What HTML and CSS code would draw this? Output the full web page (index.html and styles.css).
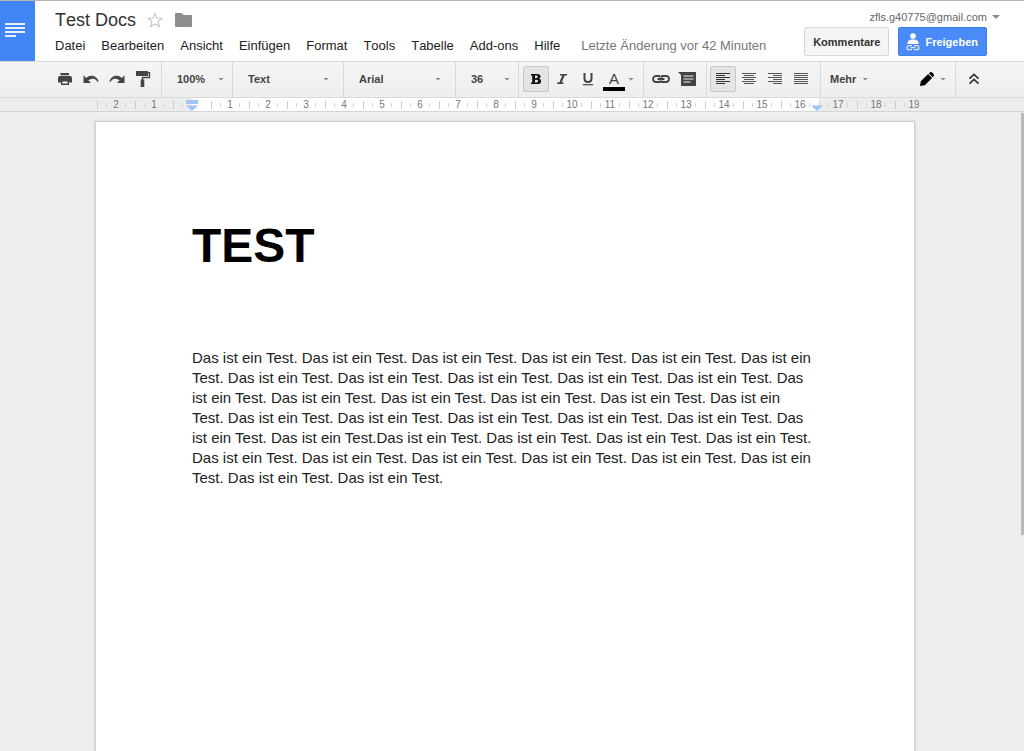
FILE: index.html
```html
<!DOCTYPE html>
<html lang="de">
<head>
<meta charset="utf-8">
<title>Test Docs</title>
<link rel="stylesheet" href="styles.css">
</head>
<body>
<header class="header">
  <a class="home" href="#" aria-label="Startseite">
    <svg width="20" height="16" viewBox="0 0 20 16"><path d="M0 2h20M0 6h20M0 10h20M0 14h11" stroke="#e9f1ff" stroke-width="2"/></svg>
  </a>
  <div class="heading">
    <div class="title-row">
      <h1 class="title">Test Docs</h1>
      <button class="plain" aria-label="Markieren"><svg width="16" height="16" viewBox="0 0 16 16"><path d="M8 1.400l1.900 4.600 5 .4-3.800 3.300 1.200 4.900L8 12l-4.300 2.600 1.200-4.900L1.100 6.400l5-.4z" fill="none" stroke="#c4c4c4" stroke-width="1.100"/></svg></button>
      <button class="plain" aria-label="Ordner"><svg width="17" height="16" viewBox="0 0 17 16"><path d="M1 1h5.500l2 2H16q1 0 1 1v10q0 1-1 1H1q-1 0-1-1V2q0-1 1-1z" fill="#8d8d8d"/></svg></button>
    </div>
    <nav class="menu">
      <button class="menu-item">Datei</button>
      <button class="menu-item">Bearbeiten</button>
      <button class="menu-item">Ansicht</button>
      <button class="menu-item">Einfügen</button>
      <button class="menu-item">Format</button>
      <button class="menu-item">Tools</button>
      <button class="menu-item">Tabelle</button>
      <button class="menu-item">Add-ons</button>
      <button class="menu-item">Hilfe</button>
      <a class="saved" href="#">Letzte Änderung vor 42 Minuten</a>
    </nav>
  </div>
  <div class="account">
    <button class="email">zfls.g40775@gmail.com <span class="caret wide"></span></button>
    <div class="actions">
      <button class="action">Kommentare</button>
      <button class="action share"><svg width="14" height="18" viewBox="0 0 14 18"><circle cx="7" cy="3" r="2.800" fill="#fff"/><path d="M1.500 11V9.500Q2 7 5 6.600h4q3 .4 3.500 2.900V11z" fill="#fff"/><path d="M6 12.700H3a2 2 0 0 0 0 4h3M8 12.700h3a2 2 0 0 1 0 4H8M4.500 14.700h5" fill="none" stroke="#dbe8ff" stroke-width="1.200"/></svg>Freigeben</button>
    </div>
  </div>
</header>

<div class="toolbar" role="toolbar">
  <div class="group first">
    <button class="tool" aria-label="Drucken"><svg width="16" height="14" viewBox="0 0 16 14"><path d="M3.500 1h8.500v2.200H3.500zM3 4h10q2 0 2 2v4.500h-3V8H4v2.500H1V6q0-2 2-2z" fill="#444"/><path d="M4.700 8.700h6.600v3.600H4.700z" fill="#f5f5f5" stroke="#444" stroke-width="1.400"/></svg></button>
    <button class="tool" aria-label="Rückgängig"><svg width="16" height="14" viewBox="0 0 16 14"><path d="M.5 3v8H8L5.300 8.300Q8 6.200 10.700 6.800 13.200 7.400 14.600 10L15.600 9.500Q14.200 5 10.500 4 6.200 3 3 6z" fill="#444"/></svg></button>
    <button class="tool" aria-label="Wiederholen"><svg width="16" height="14" viewBox="0 0 16 14"><path d="M15.500 3v8H8l2.700-2.700Q8 6.200 5.300 6.800 2.800 7.400 1.400 10L.4 9.500Q1.800 5 5.500 4 9.800 3 13 6z" fill="#444"/></svg></button>
    <button class="tool" aria-label="Format übertragen"><svg width="16" height="18" viewBox="0 0 16 18"><path d="M1 1h12v5H1zM5.700 9.500h3.600V17H5.700z" fill="#444"/><path d="M12.500 2.700h2v4.800h-7v3" fill="none" stroke="#444" stroke-width="1.400"/></svg></button>
  </div>
  <label class="group pick zoom"><select aria-label="Zoom"><option>100%</option></select><span class="caret"></span></label>
  <label class="group pick style"><select aria-label="Formatvorlage"><option>Text</option></select><span class="caret"></span></label>
  <label class="group pick font"><select aria-label="Schriftart"><option>Arial</option></select><span class="caret"></span></label>
  <label class="group pick size"><select aria-label="Schriftgröße"><option>36</option></select><span class="caret"></span></label>
  <div class="group format">
    <button class="tool on bold" aria-pressed="true" aria-label="Fett"><svg width="12" height="12" viewBox="0 0 12 12"><path fill-rule="evenodd" d="M1 1h6.200q3.400 0 3.400 2.600 0 1.700-1.700 2.100 2.200.4 2.200 2.500Q11.100 11 7.600 11H1V9.400h1.200V2.600H1zM5 2.600v2.500h1.300q1.500 0 1.500-1.300T6.300 2.600zM5 6.700v2.700h1.600Q8.100 9.400 8.100 8T6.600 6.700z" fill="#111"/></svg></button>
    <button class="tool" aria-label="Kursiv"><svg width="12" height="12" viewBox="0 0 12 12"><path d="M4 1.800h7M1 10.200h6.500" stroke="#444" stroke-width="1.600"/><path d="M7.800 1.500L4.200 10.500" stroke="#444" stroke-width="2.200"/></svg></button>
    <button class="tool" aria-label="Unterstrichen"><svg width="12" height="14" viewBox="0 0 12 14"><path d="M2.500 1v5.500Q2.500 10 6 10t3.500-3.500V1" fill="none" stroke="#444" stroke-width="2"/><path d="M1 12.700h10" stroke="#444" stroke-width="1.200"/></svg></button>
    <button class="tool color" aria-label="Textfarbe"><span>A</span></button>
    <span class="caret"></span>
  </div>
  <div class="group insert">
    <button class="tool" aria-label="Link"><svg width="20" height="12" viewBox="0 0 20 12"><path d="M9 3H5a3 3 0 0 0 0 6h4V7.500M9 4.500V3M11 4.500V3h4a3 3 0 0 1 0 6h-4V7.500M6.500 6h7" fill="none" stroke="#444" stroke-width="1.800"/></svg></button>
    <button class="tool" aria-label="Kommentar"><svg width="18" height="16" viewBox="0 0 18 16"><path d="M0 1h18v14H3V4z" fill="#444"/><path d="M5.500 5h10M5.500 8h10M5.500 11h7" stroke="#eee" stroke-width="1.200"/></svg></button>
  </div>
  <div class="group align">
    <button class="tool on" aria-pressed="true" aria-label="Linksbündig"><svg width="16" height="14" viewBox="0 0 16 14"><path d="M1 1.500h14M1 3.500h9M1 5.500h14M1 7.500h9M1 9.500h14M1 11.500h9" stroke="#333"/></svg></button>
    <button class="tool" aria-label="Zentriert"><svg width="16" height="14" viewBox="0 0 16 14"><path d="M1 1.500h14M3 3.500h10M1 5.500h14M3 7.500h10M1 9.500h14M3 11.500h10" stroke="#555"/></svg></button>
    <button class="tool" aria-label="Rechtsbündig"><svg width="16" height="14" viewBox="0 0 16 14"><path d="M1 1.500h14M6 3.500h9M1 5.500h14M6 7.500h9M1 9.500h14M6 11.500h9" stroke="#555"/></svg></button>
    <button class="tool" aria-label="Blocksatz"><svg width="16" height="14" viewBox="0 0 16 14"><path d="M1 1.500h14M1 3.500h14M1 5.500h14M1 7.500h14M1 9.500h14M1 11.500h14" stroke="#555"/></svg></button>
  </div>
  <div class="group more">
    <button class="more-button">Mehr <span class="caret"></span></button>
    <button class="mode" aria-label="Bearbeitungsmodus"><svg width="14" height="14" viewBox="0 0 14 14"><path d="M0 14l.8-4.800L8.100 2l4 4-7.300 7.200zM8.900 1.300L10.200.2q.8-.5 1.600 0l2 2q.5.800 0 1.600l-1.200 1.400z" fill="#000"/></svg><span class="caret"></span></button>
  </div>
  <div class="group collapse">
    <button class="tool" aria-label="Menüs ausblenden"><svg width="12" height="12" viewBox="0 0 12 12"><path d="M1.500 5.700L6 1.500l4.500 4.200M1.500 10.700L6 6.500l4.500 4.200" fill="none" stroke="#333" stroke-width="1.700"/></svg></button>
  </div>
</div>

<div class="ruler">
  <div class="scale">
    <div class="cm out">2</div><div class="cm out">1</div><div class="cm zero"></div>
    <div class="cm">1</div><div class="cm">2</div><div class="cm">3</div><div class="cm">4</div><div class="cm">5</div><div class="cm">6</div><div class="cm">7</div><div class="cm">8</div><div class="cm">9</div><div class="cm">10</div><div class="cm">11</div><div class="cm">12</div><div class="cm">13</div><div class="cm">14</div><div class="cm">15</div><div class="cm">16</div>
    <div class="cm out">17</div><div class="cm out">18</div><div class="cm out">19</div>
    <svg class="indent start" width="12" height="12" viewBox="0 0 12 12"><path d="M0 0h12v4H0zM0 5.500h12L6 11z" fill="#a3c4fb"/></svg>
    <svg class="indent end" width="12" height="12" viewBox="0 0 12 12"><path d="M0 5.500h12L6 11z" fill="#a3c4fb"/></svg>
  </div>
</div>

<main class="canvas">
  <article class="page">
    <h2 class="doc-title">TEST</h2>
    <p class="doc-text">Das ist ein Test. Das ist ein Test. Das ist ein Test. Das ist ein Test. Das ist ein Test. Das ist ein Test. Das ist ein Test. Das ist ein Test. Das ist ein Test. Das ist ein Test. Das ist ein Test. Das ist ein Test. Das ist ein Test. Das ist ein Test. Das ist ein Test. Das ist ein Test. Das ist ein<br>Test. Das ist ein Test. Das ist ein Test. Das ist ein Test. Das ist ein Test. Das ist ein Test. Das ist ein Test. Das ist ein Test.Das ist ein Test. Das ist ein Test. Das ist ein Test. Das ist ein Test. Das ist ein Test. Das ist ein Test. Das ist ein Test. Das ist ein Test. Das ist ein Test. Das ist ein Test. Das ist ein Test. Das ist ein Test.</p>
  </article>
  <div class="scrollbar"></div>
</main>
</body>
</html>
```

FILE: styles.css
```css
* { box-sizing: border-box; }
body {
  margin: 0;
  height: 100vh;
  display: flex;
  flex-direction: column;
  overflow: hidden;
  background: #eee;
  color: #222;
  font-family: "Liberation Sans", Arial, sans-serif;
  font-size: 13px;
}
button, select {
  border: 0;
  padding: 0;
  background: none;
  font: inherit;
  color: inherit;
}
svg { display: block; flex: none; }

.header {
  display: flex;
  flex: none;
  height: 61px;
  background: #fff;
  border-top: 1px solid #b4b4b4;
  font-kerning: none;
}
.home {
  width: 35px;
  padding: 21px 0 0 5px;
  background: #4285f4;
}
.heading { flex: 1; padding: 8px 0 0 20px; }
.title-row { display: flex; align-items: center; height: 22px; }
.title { margin: 0 11px 0 0; font-size: 18px; line-height: 22px; font-weight: 400; color: #333; }
.plain { margin-right: 12px; }
.menu { display: flex; align-items: center; gap: 16px; height: 28px; white-space: nowrap; }
.saved { margin-left: 5px; color: #777; text-decoration: none; }
.account { padding: 8px 24px 0 0; display: flex; flex-direction: column; align-items: flex-end; }
.email { display: flex; align-items: center; gap: 5px; height: 16px; font-size: 11px; color: #666; }
.actions { display: flex; gap: 9px; margin: 2px 13px 0 0; }
.action {
  height: 29px;
  padding: 0 8px;
  border: 1px solid #d8d8d8;
  border-radius: 2px;
  background: #f5f5f5;
  font-size: 11px;
  font-weight: 700;
  color: #333;
}
.share {
  display: flex;
  align-items: center;
  gap: 5px;
  padding: 0 8px 0 7px;
  border-color: #3d7eea;
  background: #4a8bf7;
  color: #fff;
}

.caret {
  flex: none;
  width: 6px;
  height: 3px;
  background: #8a8a8a;
  clip-path: polygon(0 0, 100% 0, 50% 100%);
}
.wide { width: 8px; height: 4px; }

.toolbar {
  display: flex;
  flex: none;
  height: 37px;
  border-top: 1px solid #d9d9d9;
  border-bottom: 1px solid #d9d9d9;
  background: linear-gradient(#f5f5f5, #eee);
  font-size: 11px;
  font-weight: 700;
  color: #444;
}
.group {
  display: flex;
  align-items: center;
  flex: none;
  padding-bottom: 1px;
  border-left: 1px solid #dadada;
}
.first { width: 161px; padding-left: 52px; border-left: 0; }
.tool { display: flex; align-items: center; justify-content: center; width: 26px; height: 26px; }
.on { border: 1px solid #c8c8c8; border-radius: 2px; background: #e4e4e4; }
.pick { display: grid; }
.pick select { grid-area: 1 / 1; width: 100%; height: 100%; padding-left: 15px; appearance: none; }
.pick .caret { grid-area: 1 / 1; justify-self: end; margin-right: 14px; pointer-events: none; }
.zoom { width: 71px; }
.style { width: 111px; }
.font { width: 112px; }
.size { width: 63px; }
.zoom .caret, .size .caret { margin-right: 8px; }
.format { width: 125px; padding-left: 4px; }
.color { font-size: 15px; font-weight: 400; margin-right: 1px; }
.color span { width: 22px; height: 20px; margin-top: 3px; border-bottom: 4px solid #000; line-height: 16px; }
.insert { width: 63px; padding-left: 4px; }
.align { width: 114px; padding-left: 3px; }
.more { flex: 1; justify-content: space-between; padding: 0 9px 1px; }
.more-button, .mode { display: flex; align-items: center; gap: 6px; height: 26px; }
.collapse { width: 69px; padding-left: 5px; }

.ruler {
  flex: none;
  height: 14px;
  padding-right: 14px;
  border-bottom: 1px solid #d4d4d4;
  background: #ececec;
}
.scale {
  position: relative;
  display: flex;
  max-width: 828px;
  height: 13px;
  margin: 0 auto;
  padding-left: 6px;
  overflow: hidden;
}
.cm {
  flex: none;
  width: 38px;
  line-height: 13px;
  text-align: center;
  font-size: 10px;
  color: #777;
  background:
    linear-gradient(#ccc, #ccc) 0 3px / 1px 8px no-repeat,
    linear-gradient(#d4d4d4, #d4d4d4) 9px 5px / 1px 4px no-repeat,
    linear-gradient(#d4d4d4, #d4d4d4) 28px 5px / 1px 4px no-repeat,
    #fff;
}
.out { background-color: #ececec; }
.zero { background-color: #ececec; box-shadow: inset -19px 0 #fff; }
.indent { position: absolute; top: 2px; }
.start { left: 95px; }
.end { left: 720px; }

.canvas { position: relative; flex: 1; min-height: 0; padding: 9px 14px 0 0; overflow: hidden; }
.page {
  max-width: 820px;
  min-height: 1160px;
  margin: 0 auto;
  padding: 96px 96px 0;
  border: 1px solid #d0d0d0;
  background: #fff;
  box-shadow: 0 0 3px #ccc;
}
.doc-title { margin: 0; font-size: 48px; line-height: 56px; color: #000; }
.doc-text { margin: 74px 0 0; font-size: 15px; line-height: 20px; color: #222; }
.scrollbar { position: absolute; top: 1px; right: 0; width: 3px; height: 66%; background: #b8b8b8; }
```
